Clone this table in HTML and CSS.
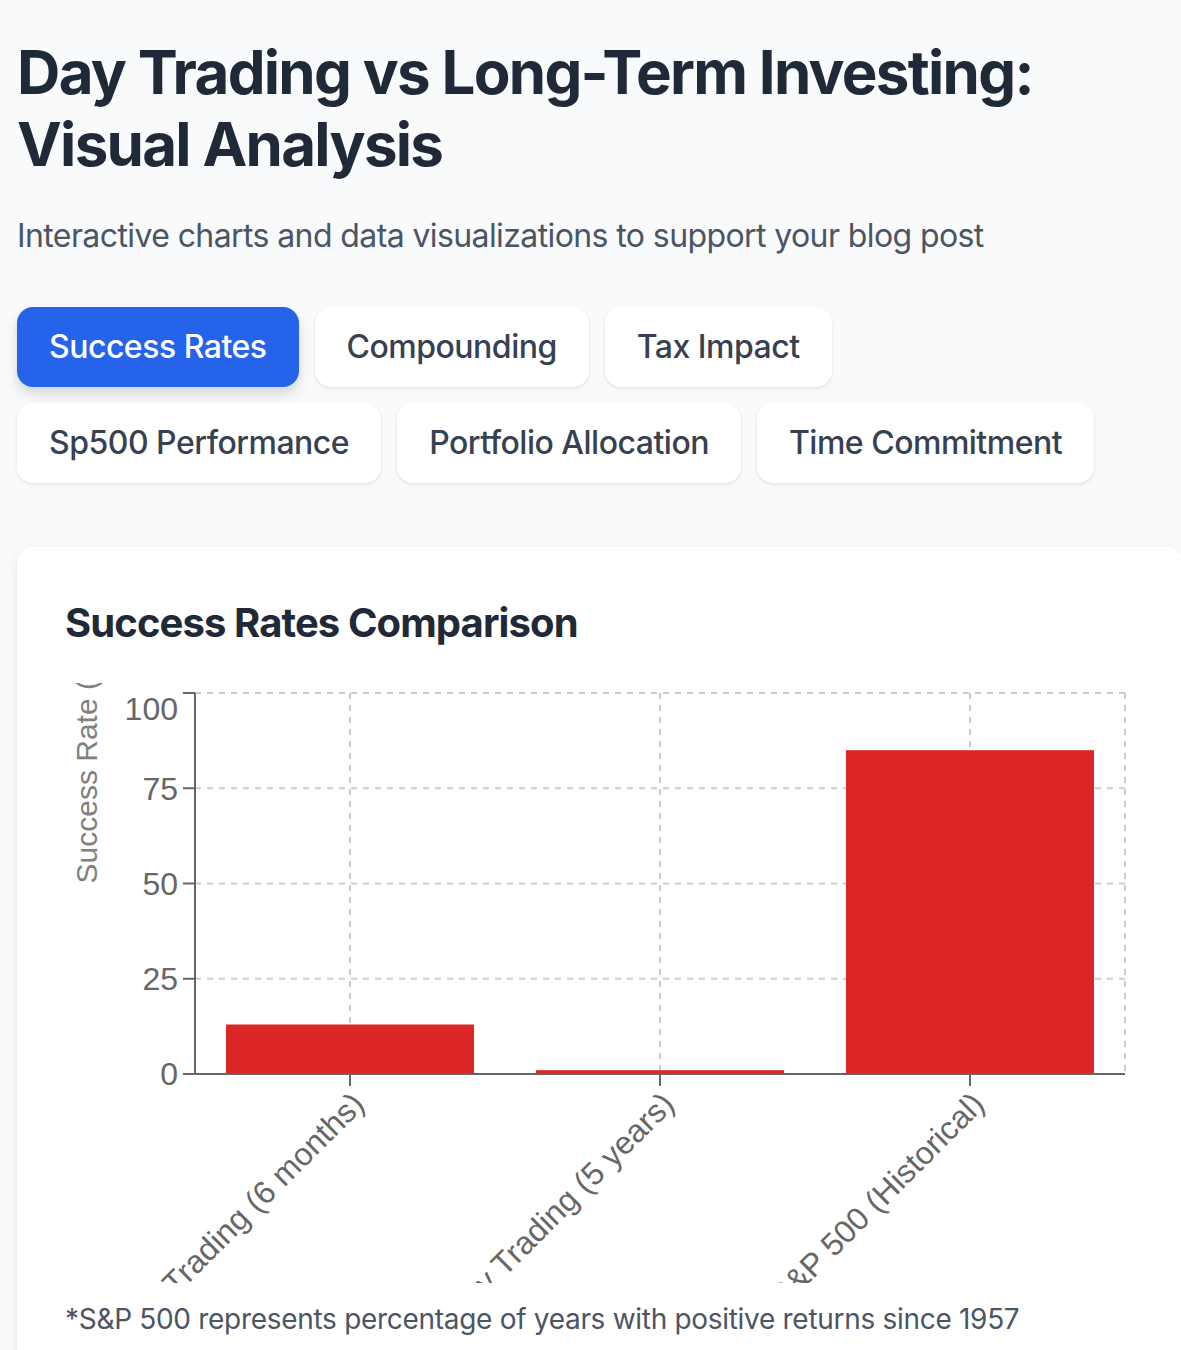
FILE: index.html
```html
<!DOCTYPE html>
<html lang="en">
<head>
<meta charset="utf-8">
<title>Day Trading vs Long-Term Investing: Visual Analysis</title>
<link rel="stylesheet" href="styles.css">
</head>
<body>
<main class="page">
  <h1 class="title">Day Trading vs Long-Term Investing: Visual Analysis</h1>
  <p class="subtitle">Interactive charts and data visualizations to support your blog post</p>
  <nav class="tabs">
    <button class="tab active">Success Rates</button>
    <button class="tab">Compounding</button>
    <button class="tab">Tax Impact</button>
    <button class="tab">Sp500 Performance</button>
    <button class="tab">Portfolio Allocation</button>
    <button class="tab">Time Commitment</button>
  </nav>
  <section class="card">
    <h2 class="card-title">Success Rates Comparison</h2>
    <div class="chart">
      <svg class="chart-svg" width="1070" height="600" viewBox="0 0 1070 600">
        <g class="grid">
          <line x1="130" y1="10" x2="1060" y2="10"/>
          <line x1="130" y1="105.25" x2="1060" y2="105.25"/>
          <line x1="130" y1="200.5" x2="1060" y2="200.5"/>
          <line x1="130" y1="295.75" x2="1060" y2="295.75"/>
          <line x1="285" y1="10" x2="285" y2="391"/>
          <line x1="595" y1="10" x2="595" y2="391"/>
          <line x1="905" y1="10" x2="905" y2="391"/>
          <line x1="1060" y1="10" x2="1060" y2="391"/>
        </g>
        <g class="bars">
          <rect x="161" y="341.5" width="248" height="49.5"/>
          <rect x="471" y="387.2" width="248" height="3.8"/>
          <rect x="781" y="67.2" width="248" height="323.8"/>
        </g>
        <g class="axis">
          <line x1="130" y1="10" x2="130" y2="392"/>
          <line x1="129" y1="391" x2="1060" y2="391"/>
          <line x1="118" y1="10" x2="130" y2="10"/>
          <line x1="118" y1="105.25" x2="130" y2="105.25"/>
          <line x1="118" y1="200.5" x2="130" y2="200.5"/>
          <line x1="118" y1="295.75" x2="130" y2="295.75"/>
          <line x1="118" y1="391" x2="130" y2="391"/>
          <line x1="285" y1="391" x2="285" y2="403"/>
          <line x1="595" y1="391" x2="595" y2="403"/>
          <line x1="905" y1="391" x2="905" y2="403"/>
        </g>
        <g class="ytick">
          <text x="113" y="25.5" dy="0.355em">100</text>
          <text x="113" y="105.25" dy="0.355em">75</text>
          <text x="113" y="200.5" dy="0.355em">50</text>
          <text x="113" y="295.75" dy="0.355em">25</text>
          <text x="113" y="391" dy="0.355em">0</text>
        </g>
        <g class="xtick">
          <text x="285" y="407" dy="0.71em" transform="rotate(-45 285 407)">Day Trading (6 months)</text>
          <text x="595" y="407" dy="0.71em" transform="rotate(-45 595 407)">Day Trading (5 years)</text>
          <text x="905" y="407" dy="0.71em" transform="rotate(-45 905 407)">S&amp;P 500 (Historical)</text>
        </g>
        <text class="ylabel" x="21" y="200.5" dy="0.355em" transform="rotate(-90 21 200.5)">Success Rate (%)</text>
      </svg>
    </div>
    <p class="note">*S&amp;P 500 represents percentage of years with positive returns since 1957</p>
  </section>
</main>
</body>
</html>
```
FILE: styles.css
```css
* { box-sizing: border-box; }

html, body {
  margin: 0;
  padding: 0;
  background: #f9fafb;
}

body {
  font-family: Inter, "Noto Sans", "Liberation Sans", sans-serif;
  color: #1f2937;
}

.page {
  padding: 36px 17px 0 17px;
}

.title {
  margin: 0 0 32px 0;
  font-size: 60px;
  line-height: 72px;
  font-weight: 700;
  color: #1f2937;
  letter-spacing: -1.7px;
}

.subtitle {
  margin: 0 0 47px 0;
  font-size: 32px;
  line-height: 48px;
  color: #4b5563;
  letter-spacing: -0.6px;
}

.tabs {
  display: flex;
  flex-wrap: wrap;
  gap: 16px;
  margin-bottom: 64px;
}

.tab {
  font-family: inherit;
  font-size: 32px;
  line-height: 48px;
  font-weight: 500;
  letter-spacing: -0.5px;
  padding: 16px 32px;
  border: none;
  border-radius: 16px;
  background: #ffffff;
  color: #374151;
  box-shadow: 0 2px 4px rgba(0, 0, 0, 0.06), 0 1px 3px rgba(0, 0, 0, 0.05);
  cursor: pointer;
}

.tab.active {
  background: #2563eb;
  color: #ffffff;
  box-shadow: 0 8px 14px rgba(0, 0, 0, 0.1), 0 4px 8px rgba(0, 0, 0, 0.06);
}

.card {
  width: 1166px;
  background: #ffffff;
  border-radius: 16px;
  padding: 48px;
  box-shadow: 0 4px 12px rgba(0, 0, 0, 0.06), 0 2px 4px rgba(0, 0, 0, 0.04);
}

.card-title {
  margin: 0 0 32px 0;
  font-size: 40px;
  line-height: 56px;
  font-weight: 700;
  letter-spacing: -0.9px;
  color: #1f2937;
}

.chart {
  height: 600px;
}

.chart-svg {
  display: block;
  overflow: hidden;
  font-family: "Liberation Sans", Arial, sans-serif;
  font-size: 32px;
}

.grid line {
  stroke: #cccccc;
  stroke-width: 2;
  stroke-dasharray: 6 6;
}

.bars rect {
  fill: #dc2626;
}

.axis line {
  stroke: #666666;
  stroke-width: 2;
}

.ytick text {
  fill: #666666;
  text-anchor: end;
}

.xtick text {
  fill: #666666;
  text-anchor: end;
}

.ylabel {
  fill: #808080;
  font-size: 30px;
  text-anchor: start;
}

.note {
  margin: 16px 0 0 0;
  font-size: 28px;
  line-height: 40px;
  color: #4b5563;
  letter-spacing: -0.3px;
}
```
